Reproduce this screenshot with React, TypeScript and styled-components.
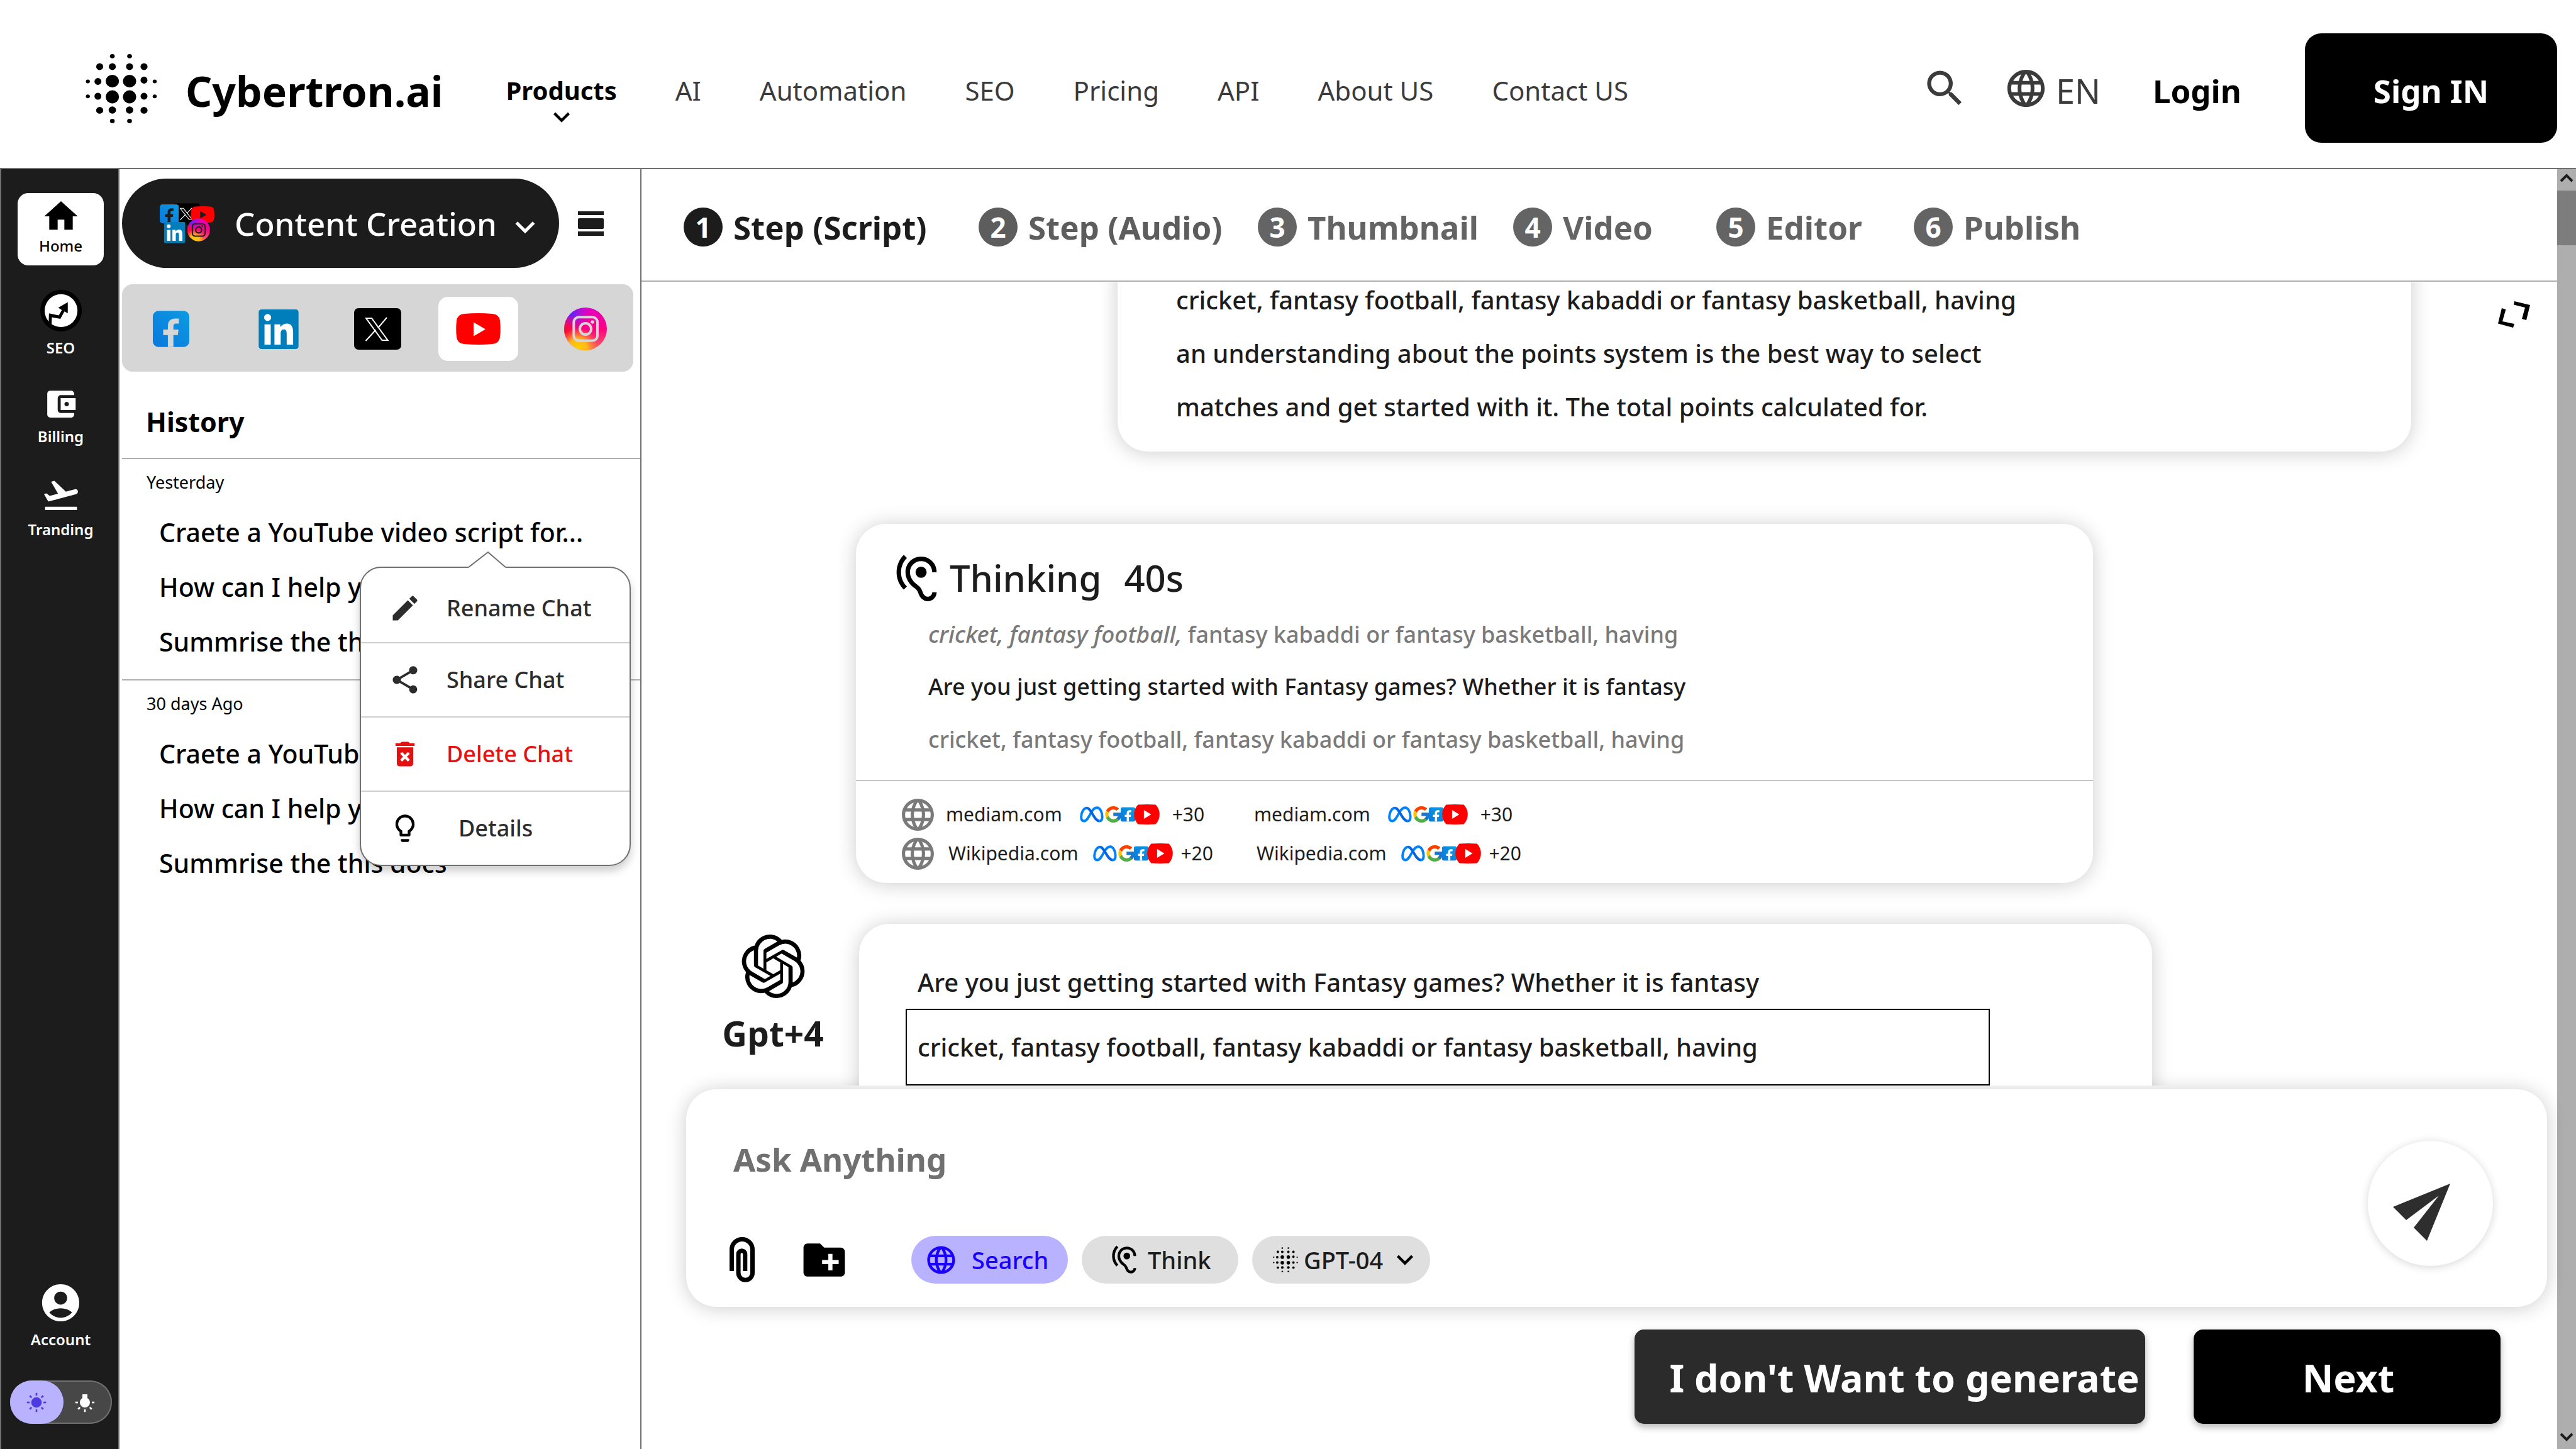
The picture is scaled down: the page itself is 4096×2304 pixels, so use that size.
import React from "react";
import styled, { createGlobalStyle, css } from "styled-components";
import {
  MdAccountBalanceWallet,
  MdAccountCircle,
  MdCreateNewFolder,
  MdDeleteForever,
  MdEdit,
  MdExpandMore,
  MdFlightTakeoff,
  MdHearing,
  MdHome,
  MdLanguage,
  MdLightbulbOutline,
  MdSearch,
  MdShare,
} from "react-icons/md";
import { FcGoogle } from "react-icons/fc";

const ink = "#1c1c1c";
const rule = "#707070";
const softRule = "#afafaf";
const lilac = "#b9b3ff";
const glow = "0 2px 32px rgba(0, 0, 0, 0.2)";

const Global = createGlobalStyle`
  *, *::before, *::after { box-sizing: border-box; }
  body {
    margin: 0;
    background: #fff;
    color: #000;
    font-family: "Noto Sans", "Open Sans", sans-serif;
  }
  button, input { font: inherit; color: inherit; }
  button { margin: 0; padding: 0; border: 0; background: none; cursor: pointer; }
  a { color: inherit; text-decoration: none; }
  ul, ol, p, h1, h2, h3 { margin: 0; padding: 0; list-style: none; }
  svg { display: block; flex: none; }
`;

/* ---------- drawings ---------- */

const dotRows: [number, number, number, number][] = [
  [139.7, 130.5, 3.2, 3], [246, 130.5, 3.2, 3], [139.7, 154.2, 3.2, 3], [246, 154.2, 3.2, 3],
  [178.6, 90.3, 3.8, 3.4], [206, 90.3, 3.8, 3.4], [178.6, 193.4, 3.8, 3.4], [206, 193.4, 3.8, 3.4],
  [158.5, 107, 5.6, 5.4], [178.6, 107, 5.6, 5.4], [206, 107, 5.6, 5.4], [229, 107, 5.6, 5.4],
  [158.5, 176.4, 5.6, 5.4], [178.6, 176, 5.9, 5.8], [206, 176, 5.9, 5.8], [229, 176.4, 5.6, 5.4],
  [155.7, 130.5, 5.5, 5.4], [229, 128.4, 5.5, 5.6], [155.7, 154, 5.5, 5.6], [229, 154, 5.5, 5.4],
  [178.6, 130, 10.6, 10], [206, 130, 10.6, 10], [178.6, 155, 10.6, 10.4], [206, 155, 10.6, 10.4],
];

const DotMark = ({ width, height, even }: { width: number; height: number; even?: boolean }) => (
  <svg width={width} height={height} viewBox="136 86 114 111" preserveAspectRatio="none" fill="currentColor" aria-hidden>
    {dotRows.map(([x, y, rx, ry], i) => (
      <ellipse key={i} cx={x} cy={y} rx={even ? Math.min(rx, 8) : rx} ry={even ? Math.min(ry, 8) : ry} />
    ))}
  </svg>
);

type Art = { x?: number; y?: number; width: number; height: number; cut?: string };

const FacebookArt = ({ cut = "#d6d6d6", ...box }: Art) => (
  <svg {...box} viewBox="76 64 172 170" aria-hidden>
    <defs>
      <linearGradient id="fbBlue" x1="0" y1="1" x2="1" y2="0">
        <stop offset="0" stopColor="#0a78dc" />
        <stop offset="1" stopColor="#0c9be2" />
      </linearGradient>
    </defs>
    <rect x="76" y="64" width="172" height="170" rx="26" fill="url(#fbBlue)" />
    <path
      fill={cut}
      d="M147 234V178H125V152H147V134C147 112 160 100 182 100H199V124H186C177 124 173 129 173 137V152H197L194 178H173V234Z"
    />
  </svg>
);

const LinkedInArt = (box: Art) => (
  <svg {...box} viewBox="114 222 192 191" aria-hidden>
    <rect x="114" y="222" width="192" height="191" rx="14" fill="#007ebb" />
    <circle cx="157" cy="261" r="17" fill="#fff" />
    <path
      fill="#fff"
      d="M142 294H172V392H142ZM190 294H218V307C226 296 238 290 250 290C272 290 280 306 280 332V392H249V340C249 326 246 318 235 318C224 318 220 327 220 340V392H190Z"
    />
  </svg>
);

const XArt = (box: Art) => (
  <svg {...box} viewBox="0 0 75 66" preserveAspectRatio="none" aria-hidden>
    <rect width="75" height="66" rx="7" fill="#000" />
    <g fill="none" stroke="#fff" strokeWidth="2">
      <path d="M19 16H28L53.5 51H44.5Z" />
      <path d="M52 15L38 31.500M18.500 52L34.500 34.500" />
    </g>
  </svg>
);

const YouTubeArt = ({ cut = "#fff", ...box }: Art) => (
  <svg {...box} viewBox="0 0 71 50" preserveAspectRatio="none" aria-hidden>
    <path
      fill="#f00"
      d="M13 1Q35.500-1 58 1Q69 2 70 12Q71.500 25 70 38Q69 48 58 49Q35.500 51 13 49Q2 48 1 38Q-.5 25 1 12Q2 2 13 1Z"
    />
    <path fill={cut} d="M28 14.500L47 25.500L28 36.500Z" />
  </svg>
);

const InstagramArt = ({ cut = "#d6d6d6", ...box }: Art) => (
  <svg {...box} viewBox="324 192 204 204" aria-hidden>
    <defs>
      <linearGradient id="igBase" x1="0" y1="0" x2="0" y2="1">
        <stop offset="0" stopColor="#e200c4" />
        <stop offset=".5" stopColor="#ff0080" />
        <stop offset="1" stopColor="#f26a5e" />
      </linearGradient>
      <radialGradient id="igViolet" cx=".18" cy=".14" r=".42">
        <stop offset="0" stopColor="#5a22ff" />
        <stop offset="1" stopColor="#9a1cf0" stopOpacity="0" />
      </radialGradient>
      <radialGradient id="igRed" cx="0" cy=".55" r=".4">
        <stop offset="0" stopColor="#ff0a28" />
        <stop offset="1" stopColor="#ff0a28" stopOpacity="0" />
      </radialGradient>
      <radialGradient id="igGold" cx=".32" cy=".95" r=".48">
        <stop offset="0" stopColor="#ffd000" />
        <stop offset=".45" stopColor="#ffb81c" />
        <stop offset="1" stopColor="#ff7a2c" stopOpacity="0" />
      </radialGradient>
    </defs>
    {["igBase", "igViolet", "igRed", "igGold"].map((id) => (
      <circle key={id} cx="426" cy="294" r="102" fill={`url(#${id})`} />
    ))}
    <g fill="none" stroke={cut} strokeWidth="12">
      <rect x="370" y="238" width="113" height="112" rx="24" />
      <circle cx="426" cy="294" r="27" />
    </g>
    <circle cx="459" cy="261" r="8" fill={cut} />
  </svg>
);

const SocialCluster = () => (
  <svg width="87" height="64" viewBox="76 54 492 360" aria-hidden>
    <XArt x={200} y={54} width={237} height={191} />
    <FacebookArt x={76} y={64} width={172} height={170} cut={ink} />
    <YouTubeArt x={357} y={81} width={211} height={150} cut={ink} />
    <LinkedInArt x={114} y={222} width={192} height={191} />
    <InstagramArt x={324} y={192} width={204} height={204} cut={ink} />
  </svg>
);

const SourceCluster = () => (
  <svg width="127" height="32" viewBox="86 55 713 178" aria-hidden>
    <g fill="none" strokeWidth="22">
      <path
        stroke="#0082fb"
        d="M148 86C118 86 98 130 98 165C98 190 108 203 124 203C150 203 168 160 188 126C202 102 218 84 238 84C268 84 286 125 286 165C286 190 276 203 262 203"
      />
      <path stroke="#0465e2" d="M148 86C190 86 210 203 262 203" />
    </g>
    <FcGoogle x={298} y={56} size={175} />
    <FacebookArt x={450} y={78} width={132} height={132} cut="#fff" />
    <path
      fill="#f00"
      d="M605 57Q685 52 763 57Q798 95 798 143Q798 195 763 231Q685 236 605 231Q570 195 570 143Q570 95 605 57Z"
    />
    <path fill="#fff" d="M658 105L723 144L658 183Z" />
  </svg>
);

const SeoIcon = () => (
  <svg width="72" height="72" viewBox="43 25 405 405" aria-hidden>
    <circle cx="246" cy="227" r="186" fill="#000" />
    <circle cx="246" cy="227" r="147" fill="#fff" />
    <path d="M135 340L138 252L226 270L253 222L221 201L306 152V250L276 234L240 300L164 286L161 355Z" />
  </svg>
);

const MenuBars = () => (
  <svg width="41" height="39" viewBox="0 0 41 39" fill={ink} aria-hidden>
    <rect width="41" height="6" />
    <rect y="11" width="41" height="17" rx="2" />
    <rect y="32" width="41" height="7" />
  </svg>
);

const OpenAiMark = () => (
  <svg width="101" height="101" viewBox="0 0 24 24" fill="#000" aria-hidden>
    <path d="M22.2819 9.8211a5.9847 5.9847 0 0 0-.5157-4.9108 6.0462 6.0462 0 0 0-6.5098-2.9A6.0651 6.0651 0 0 0 4.9807 4.1818a5.9847 5.9847 0 0 0-3.9977 2.9 6.0462 6.0462 0 0 0 .7427 7.0966 5.98 5.98 0 0 0 .511 4.9107 6.051 6.051 0 0 0 6.5146 2.9001A5.9847 5.9847 0 0 0 13.2599 24a6.0557 6.0557 0 0 0 5.7718-4.2058 5.9894 5.9894 0 0 0 3.9977-2.9001 6.0557 6.0557 0 0 0-.7475-7.0729zm-9.022 12.6081a4.4755 4.4755 0 0 1-2.8764-1.0408l.1419-.0804 4.7783-2.7582a.7948.7948 0 0 0 .3927-.6813v-6.7369l2.02 1.1686a.071.071 0 0 1 .038.052v5.5826a4.504 4.504 0 0 1-4.4945 4.4944zm-9.6607-4.1254a4.4708 4.4708 0 0 1-.5346-3.0137l.142.0852 4.783 2.7582a.7712.7712 0 0 0 .7806 0l5.8428-3.3685v2.3324a.0804.0804 0 0 1-.0332.0615L9.74 19.9502a4.4992 4.4992 0 0 1-6.1408-1.6464zM2.3408 7.8956a4.485 4.485 0 0 1 2.3655-1.9728V11.6a.7664.7664 0 0 0 .3879.6765l5.8144 3.3543-2.0201 1.1685a.0757.0757 0 0 1-.071 0l-4.8303-2.7865A4.504 4.504 0 0 1 2.3408 7.872zm16.5963 3.8558L13.1038 8.364 15.1192 7.2a.0757.0757 0 0 1 .071 0l4.8303 2.7913a4.4944 4.4944 0 0 1-.6765 8.1042v-5.6772a.79.79 0 0 0-.407-.667zm2.0107-3.0231l-.142-.0852-4.7735-2.7818a.7759.7759 0 0 0-.7854 0L9.409 9.2297V6.8974a.0662.0662 0 0 1 .0284-.0615l4.8303-2.7866a4.4992 4.4992 0 0 1 6.6802 4.66zM8.3065 12.863l-2.02-1.1638a.0804.0804 0 0 1-.038-.0567V6.0742a4.4992 4.4992 0 0 1 7.3757-3.4537l-.142.0805L8.704 5.459a.7948.7948 0 0 0-.3927.6813zm1.0976-2.3654l2.602-1.4998 2.6069 1.4998v2.9994l-2.5974 1.4997-2.6067-1.4997Z" />
  </svg>
);

const ClipIcon = () => (
  <svg width="40" height="72" viewBox="0 0 40 72" fill="none" stroke="#000" strokeWidth="7" aria-hidden>
    <path d="M3.500 54V20A16.500 16.500 0 0 1 36.500 20V57A11.200 11.200 0 0 1 14.100 57V27A5.350 5.350 0 0 1 24.800 27V54" />
  </svg>
);

const PlaneIcon = () => (
  <svg width="199" height="199" viewBox="0 0 199 199" fill="#2e2e2e" aria-hidden>
    <path d="M131 68L40 105L61 126L113 87L73 138L94 159Z" />
  </svg>
);

const ExpandIcon = () => (
  <svg width="51" height="42" viewBox="0 0 51 42" fill="#000" aria-hidden>
    <path d="M26 0L51 6L45 30L38 28L43 10L25 5.600ZM6 11L12.400 13L7 32L26 36L24 42L0 35.500Z" />
  </svg>
);

const Rays = ({ from, to }: { from: number; to: number }) => (
  <>
    {[0, 45, 90, 135, 180, 225, 270, 315].filter((a) => a >= from && a <= to).map((a) => (
      <rect key={a} x="11" y="-1.300" width="4.200" height="2.600" transform={`rotate(${a})`} />
    ))}
  </>
);

const SunIcon = () => (
  <svg width="32" height="32" viewBox="-16 -16 32 32" fill="#4b3be0" aria-hidden>
    <circle r="8.300" />
    <Rays from={0} to={315} />
  </svg>
);

const BulbIcon = () => (
  <svg width="32" height="32" viewBox="-16 -16 32 32" fill="#fff" aria-hidden>
    <circle r="8" />
    <rect x="-4" y="-13" width="8" height="9" />
    <Rays from={0} to={180} />
  </svg>
);

const Caret = ({ up }: { up?: boolean }) => (
  <svg width="22" height="14" viewBox="0 0 22 14" fill="none" stroke="#1c1c1c" strokeWidth="4" aria-hidden>
    <path d={up ? "M2 12L11 3L20 12" : "M2 2L11 11L20 2"} />
  </svg>
);

/* ---------- header ---------- */

const Shell = styled.div`
  display: flex;
  flex-direction: column;
  height: 100vh;
  overflow: hidden;
`;

const Header = styled.header`
  display: flex;
  align-items: center;
  padding: 53px 30px 40px 136px;
  border-bottom: 2px solid ${rule};
  white-space: nowrap;
`;

const Brand = styled.a`
  display: flex;
  align-items: center;
  gap: 45px;
  font-size: 66px;
  font-weight: 700;
  line-height: 92px;

  span { padding-top: 8px; }
`;

const NavList = styled.ul`
  display: flex;
  gap: 93px;
  margin-left: 100px;
`;

const NavLink = styled.a<{ $active?: boolean }>`
  position: relative;
  display: block;
  padding-top: 8px;
  font-size: 42px;
  line-height: 60px;
  color: #3b3b3b;
  ${(p) => p.$active && css`
    font-size: 40px;
    font-weight: 700;
    color: #000;
  `}
`;

const NavCaret = styled(MdExpandMore)`
  position: absolute;
  left: calc(50% - 26px);
  top: 54px;
`;

const HeaderTools = styled.div`
  display: flex;
  align-items: center;
  margin-left: auto;
`;

const SearchButton = styled.button`
  color: #3b3b3b;
`;

const LanguageButton = styled.button`
  display: flex;
  align-items: center;
  gap: 12px;
  margin-left: 56px;
  color: #3b3b3b;
  font-size: 54px;
  line-height: 72px;

  span { padding-top: 8px; }
`;

const LoginLink = styled.a`
  margin-left: 83px;
  padding-top: 8px;
  font-size: 51px;
  font-weight: 700;
  line-height: 72px;
`;

const SignInButton = styled.button`
  width: 401px;
  height: 174px;
  margin-left: 101px;
  padding-top: 8px;
  border-radius: 26px;
  background: #000;
  color: #fff;
  font-size: 51px;
  font-weight: 700;
`;

/* ---------- rail ---------- */

const Body = styled.div`
  display: grid;
  grid-template-columns: 190px 830px minmax(0, 1fr) 30px;
  flex: 1;
  min-height: 0;
`;

const Rail = styled.nav`
  display: flex;
  flex-direction: column;
  align-items: center;
  padding: 38px 0 40px 3px;
  border: solid ${rule};
  border-width: 0 2px;
  background: ${ink};
`;

const RailList = styled.ul`
  display: flex;
  flex-direction: column;
  gap: 36px;
`;

const RailButton = styled.button<{ $active?: boolean }>`
  display: flex;
  flex-direction: column;
  align-items: center;
  gap: 8px;
  width: 137px;
  padding-bottom: 10px;
  color: #fff;
  font-size: 24px;
  font-weight: 600;
  line-height: 30px;
  ${(p) => p.$active && css`
    gap: 0;
    padding: 5px 0 16px;
    border-radius: 17px;
    background: #fff;
    color: #000;
    font-weight: 500;
  `}
`;

const RailFoot = styled.div`
  display: flex;
  flex-direction: column;
  align-items: center;
  gap: 40px;
  margin-top: auto;
`;

const ThemeSwitch = styled.button`
  display: flex;
  width: 162px;
  height: 69px;
  border-radius: 35px;
  background: #474747;
  box-shadow: inset 0 0 0 2px ${rule};
`;

const SwitchHalf = styled.span<{ $on?: boolean }>`
  display: flex;
  align-items: center;
  justify-content: center;
  width: ${(p) => (p.$on ? 85 : 69)}px;
  height: 69px;
  border-radius: 35px;
  background: ${(p) => (p.$on ? lilac : "transparent")};
`;

/* ---------- history panel ---------- */

const Panel = styled.aside`
  padding: 15px 0 0 4px;
  border-right: 2px solid ${rule};
`;

const PanelTop = styled.div`
  display: flex;
  align-items: center;
  gap: 30px;
`;

const TopicButton = styled.button`
  display: flex;
  align-items: center;
  width: 695px;
  height: 142px;
  padding-left: 60px;
  border-radius: 71px;
  background: ${ink};
  color: #fff;
  font-size: 51px;
  font-weight: 500;
  white-space: nowrap;
`;

const TopicName = styled.span`
  margin: 0 14px 0 32px;
`;

const TopicCaret = styled.span`
  padding-top: 12px;
`;

const Platforms = styled.div`
  display: grid;
  grid-template-columns: 156fr 186fr 129fr 190fr 152fr;
  align-items: center;
  justify-items: center;
  height: 139px;
  margin: 26px 11px 0 0;
  padding-top: 3px;
  border-radius: 17px;
  background: #d6d6d6;
`;

const PlatformButton = styled.button<{ $active?: boolean }>`
  ${(p) => p.$active && css`
    padding: 26px 28px;
    border-radius: 15px;
    background: #fff;
  `}
`;

const HistoryTitle = styled.h2`
  padding: 50px 0 27px 38px;
  font-size: 43px;
  font-weight: 700;
  line-height: 60px;
`;

const Group = styled.section`
  padding: 17px 0 16px;
  border-top: 2px solid ${softRule};
`;

const GroupTitle = styled.h3`
  margin-bottom: 16px;
  padding-left: 39px;
  font-size: 27px;
  font-weight: 400;
  line-height: 40px;
`;

const ChatItem = styled.li`
  position: relative;
  padding-left: 59px;
  font-size: 41px;
  font-weight: 500;
  line-height: 87px;
  white-space: nowrap;
`;

const Menu = styled.div`
  position: absolute;
  z-index: 2;
  top: 98px;
  left: 378px;
  width: 431px;
  border: 2px solid ${rule};
  border-radius: 34px;
  background: #fff;
  box-shadow: 0 8px 14px rgba(0, 0, 0, 0.2);
`;

const MenuTip = styled.svg`
  position: absolute;
  top: -27px;
  left: 171px;
`;

const MenuItem = styled.button<{ $tone?: string; $indent?: number }>`
  display: flex;
  align-items: center;
  gap: ${(p) => p.$indent ?? 40}px;
  width: 100%;
  height: 118px;
  padding-left: 44px;
  border-top: 2px solid #cfcfcf;
  color: ${(p) => p.$tone ?? "#2c2c2c"};
  font-size: 36px;
  font-weight: 500;
  line-height: 50px;

  &:first-of-type { padding-top: 10px; border-top: 0; }
  &:last-of-type svg { color: #000; }
`;

/* ---------- workspace ---------- */

const Main = styled.main`
  display: flex;
  flex-direction: column;
  min-height: 0;
`;

const Steps = styled.ol`
  display: grid;
  grid-template-columns: 469px 444px 406px 323px 314px auto;
  padding: 61px 0 54px 67px;
  border-bottom: 2px solid ${softRule};
`;

const Step = styled.a<{ $tone: string }>`
  display: flex;
  align-items: center;
  gap: 17px;
  color: ${(p) => p.$tone};
  font-size: 51px;
  font-weight: 700;
  line-height: 62px;
  white-space: nowrap;
`;

const StepNumber = styled.span<{ $tone: string }>`
  width: 62px;
  height: 62px;
  border-radius: 50%;
  background: ${(p) => p.$tone};
  color: #fff;
  font-size: 44px;
  text-align: center;
`;

const Thread = styled.section`
  position: relative;
  z-index: 1;
  flex: 1;
  min-height: 0;
  margin: 1px 0 6px;
  overflow: hidden;
`;

const ExpandButton = styled.button`
  position: absolute;
  top: 30px;
  right: 43px;
`;

const Scrolled = styled.div`
  margin-top: -57px;
`;

const Card = styled.article`
  border-radius: 48px;
  background: #fff;
  box-shadow: ${glow};
`;

const Prompt = styled(Card)`
  margin: 0 232px 115px 757px;
  padding: 42px 93px 29px;
  color: ${ink};
  font-size: 40px;
  font-weight: 500;
  line-height: 85px;
`;

const Thinking = styled(Card)`
  margin: 0 738px 65px 341px;
  padding-bottom: 16px;
`;

const ThinkingHead = styled.h2`
  display: flex;
  align-items: center;
  gap: 10px;
  padding: 45px 54px 0;
  color: #000;
  font-size: 58px;
  font-weight: 500;
  line-height: 81px;

  span { padding-bottom: 4px; color: ${ink}; }
  span + span { margin-left: 26px; }
`;

const Thoughts = styled.div`
  padding: 3px 115px 22px;
  border-bottom: 2px solid #c4c4c4;
  font-size: 36px;
  font-weight: 500;
  line-height: 84px;

  i { font-size: 37px; }
`;

const Thought = styled.p<{ $faint?: boolean }>`
  height: 84px;
  color: ${(p) => (p.$faint ? "#7a7a7a" : ink)};
`;

const Sources = styled.ul`
  padding: 22px 0 0 68px;
`;

const SourceRow = styled.li`
  display: flex;
  align-items: center;
  height: 62px;
  color: #7a7a7a;
`;

const Source = styled.a<{ $close?: boolean }>`
  display: flex;
  align-items: center;
  gap: ${(p) => (p.$close ? 24 : 28)}px;
  width: 490px;
  color: ${ink};
  font-size: 30px;
  line-height: 42px;

  &:first-of-type { margin-left: ${(p) => (p.$close ? 18 : 14)}px; }
  span:last-child { margin-left: ${(p) => (p.$close ? -12 : -8)}px; }
`;

const ReplyRow = styled.div`
  display: flex;
  align-items: flex-start;
  padding: 0 644px 0 127px;
`;

const Author = styled.div`
  display: flex;
  flex-direction: column;
  align-items: center;
  gap: 18px;
  width: 219px;
  padding: 17px 55px 0 0;
  color: ${ink};
  font-size: 55px;
  font-weight: 700;
  line-height: 75px;
`;

const Reply = styled(Card)`
  flex: 1;
  padding: 50px 258px 60px 74px;
  color: ${ink};
  font-size: 40px;
  font-weight: 500;
`;

const ReplyLine = styled.p`
  padding-left: 19px;
  line-height: 85px;
`;

const ReplyBox = styled.p`
  padding-left: 17px;
  border: 2px solid #000;
  line-height: 118px;
`;

const Composer = styled.form`
  position: relative;
  display: flex;
  align-items: flex-start;
  height: 346px;
  margin: 0 16px 0 71px;
  padding: 76px 86px 34px 69px;
  border-radius: 48px;
  background: #fff;
  box-shadow: ${glow};
`;

const ComposerMain = styled.div`
  flex: 1;
`;

const Ask = styled.input`
  display: block;
  width: 100%;
  height: 70px;
  margin-bottom: 85px;
  padding: 0 6px;
  border: 0;
  outline: 0;
  background: none;
  font-size: 51px;
  font-weight: 700;

  &::placeholder { color: ${rule}; opacity: 1; }
`;

const Tools = styled.div`
  display: flex;
  align-items: center;
  height: 80px;
`;

const FolderButton = styled.button`
  margin: 0 99px 0 71px;
`;

const Chip = styled.button<{ $active?: boolean; $width: number; $inset: number; $gap: number }>`
  display: flex;
  align-items: center;
  gap: ${(p) => p.$gap}px;
  width: ${(p) => p.$width}px;
  height: 76px;
  margin-right: 22px;
  padding-left: ${(p) => p.$inset}px;
  border-radius: 38px;
  background: ${(p) => (p.$active ? lilac : "#dfdfdf")};
  color: ${(p) => (p.$active ? "#1a00ff" : "#000")};
  font-size: 38px;
  font-weight: 500;
  line-height: 52px;
  white-space: nowrap;

  span { color: ${(p) => (p.$active ? "#1a00ff" : ink)}; }
`;

const SendButton = styled.button`
  width: 199px;
  height: 199px;
  margin-top: 6px;
  border-radius: 50%;
  background: #fff;
  box-shadow: 0 2px 14px rgba(0, 0, 0, 0.16);
`;

const Actions = styled.footer`
  display: flex;
  justify-content: flex-end;
  gap: 77px;
  padding: 36px 90px 40px 0;
`;

const ActionButton = styled.button<{ $primary?: boolean }>`
  width: ${(p) => (p.$primary ? 488 : 812)}px;
  height: 150px;
  padding: ${(p) => (p.$primary ? "3px 0 0 4px" : "3px 8px 0 54px")};
  border-radius: 15px;
  background: ${(p) => (p.$primary ? "#000" : "#2b2b2b")};
  box-shadow: 0 5px 12px rgba(0, 0, 0, 0.3);
  color: #fff;
  font-size: 61px;
  font-weight: 700;
  white-space: nowrap;
`;

const ScrollTrack = styled.div`
  display: flex;
  flex-direction: column;
  align-items: center;
  padding: 7px 0 12px;
  background: #aeaeae;
`;

const ScrollThumb = styled.div`
  width: 100%;
  height: 87px;
  margin: 13px 0 auto;
  background: #7d7d7d;
`;

/* ---------- content ---------- */

const pages = ["AI", "Automation", "SEO", "Pricing", "API", "About US", "Contact US"];

const steps: [string, string][] = [
  ["Step (Script)", ink],
  ["Step (Audio)", "#5d5d5d"],
  ["Thumbnail", "#646464"],
  ["Video", "#646464"],
  ["Editor", "#646464"],
  ["Publish", "#646464"],
];

const groups = ["Yesterday", "30 days Ago"];
const sources: [string, string][] = [["mediam.com", "+30"], ["Wikipedia.com", "+20"]];

const ChatMenu = () => (
  <Menu>
    <MenuTip width="59" height="28" viewBox="0 0 59 28" aria-hidden>
      <path d="M0 26L31 2L59 26V28H0Z" fill="#fff" />
      <path d="M0 26L31 2L59 26" fill="none" stroke={rule} strokeWidth="2" />
    </MenuTip>
    <MenuItem type="button"><MdEdit size={52} />Rename Chat</MenuItem>
    <MenuItem type="button"><MdShare size={52} />Share Chat</MenuItem>
    <MenuItem type="button" $tone="#e31111"><MdDeleteForever size={52} />Delete Chat</MenuItem>
    <MenuItem type="button" $indent={59}><MdLightbulbOutline size={52} />Details</MenuItem>
  </Menu>
);

export default function App() {
  return (
    <Shell>
      <Global />
      <Header>
        <Brand href="#"><DotMark width={114} height={111} /><span>Cybertron.ai</span></Brand>
        <nav>
          <NavList>
            <li><NavLink href="#" $active>Products<NavCaret size={52} /></NavLink></li>
            {pages.map((p) => <li key={p}><NavLink href="#">{p}</NavLink></li>)}
          </NavList>
        </nav>
        <HeaderTools>
          <SearchButton aria-label="Search"><MdSearch size={75} /></SearchButton>
          <LanguageButton><MdLanguage size={71} /><span>EN</span></LanguageButton>
          <LoginLink href="#">Login</LoginLink>
          <SignInButton>Sign IN</SignInButton>
        </HeaderTools>
      </Header>

      <Body>
        <Rail>
          <RailList>
            <li><RailButton $active><MdHome size={64} />Home</RailButton></li>
            <li><RailButton><SeoIcon />SEO</RailButton></li>
            <li><RailButton><MdAccountBalanceWallet size={57} />Billing</RailButton></li>
            <li><RailButton><MdFlightTakeoff size={64} />Tranding</RailButton></li>
          </RailList>
          <RailFoot>
            <RailButton><MdAccountCircle size={71} />Account</RailButton>
            <ThemeSwitch role="switch" aria-checked="true" aria-label="Light theme">
              <SwitchHalf $on><SunIcon /></SwitchHalf>
              <SwitchHalf><BulbIcon /></SwitchHalf>
            </ThemeSwitch>
          </RailFoot>
        </Rail>

        <Panel>
          <PanelTop>
            <TopicButton>
              <SocialCluster />
              <TopicName>Content Creation</TopicName>
              <TopicCaret><MdExpandMore size={62} /></TopicCaret>
            </TopicButton>
            <button aria-label="Menu"><MenuBars /></button>
          </PanelTop>
          <Platforms>
            <PlatformButton aria-label="Facebook"><FacebookArt width={58} height={58} /></PlatformButton>
            <PlatformButton aria-label="LinkedIn"><LinkedInArt width={64} height={63} /></PlatformButton>
            <PlatformButton aria-label="X"><XArt width={75} height={66} /></PlatformButton>
            <PlatformButton aria-label="YouTube" $active><YouTubeArt width={71} height={50} /></PlatformButton>
            <PlatformButton aria-label="Instagram"><InstagramArt width={68} height={68} /></PlatformButton>
          </Platforms>
          <HistoryTitle>History</HistoryTitle>
          {groups.map((g, i) => (
            <Group key={g}>
              <GroupTitle>{g}</GroupTitle>
              <ul>
                <ChatItem>
                  <a href="#">{i === 0 ? "Craete a YouTube video script for..." : "Craete a YouTube"}</a>
                  {i === 0 && <ChatMenu />}
                </ChatItem>
                <ChatItem><a href="#">How can I help you</a></ChatItem>
                <ChatItem><a href="#">Summrise the this docs</a></ChatItem>
              </ul>
            </Group>
          ))}
        </Panel>

        <Main>
          <Steps>
            {steps.map(([name, tone], i) => (
              <li key={name}>
                <Step href="#" $tone={tone}><StepNumber $tone={tone}>{i + 1}</StepNumber>{name}</Step>
              </li>
            ))}
          </Steps>

          <Thread>
            <Scrolled>
              <Prompt>
                <p>cricket, fantasy football, fantasy kabaddi or fantasy basketball, having</p>
                <p>an understanding about the points system is the best way to select</p>
                <p>matches and get started with it. The total points calculated for.</p>
              </Prompt>
              <Thinking>
                <ThinkingHead><MdHearing size={85} /><span>Thinking</span><span>40s</span></ThinkingHead>
                <Thoughts>
                  <Thought $faint><i>cricket, fantasy football,</i> fantasy kabaddi or fantasy basketball, having</Thought>
                  <Thought>Are you just getting started with Fantasy games? Whether it is fantasy</Thought>
                  <Thought $faint>cricket, fantasy football, fantasy kabaddi or fantasy basketball, having</Thought>
                </Thoughts>
                <Sources>
                  {sources.map(([site, count], i) => (
                    <SourceRow key={site}>
                      <MdLanguage size={61} />
                      {[0, 1].map((n) => (
                        <Source key={n} href="#" $close={i === 1}>
                          <span>{site}</span><SourceCluster /><span>{count}</span>
                        </Source>
                      ))}
                    </SourceRow>
                  ))}
                </Sources>
              </Thinking>
              <ReplyRow>
                <Author><OpenAiMark />Gpt+4</Author>
                <Reply>
                  <ReplyLine>Are you just getting started with Fantasy games? Whether it is fantasy</ReplyLine>
                  <ReplyBox>cricket, fantasy football, fantasy kabaddi or fantasy basketball, having</ReplyBox>
                </Reply>
              </ReplyRow>
            </Scrolled>
            <ExpandButton aria-label="Expand"><ExpandIcon /></ExpandButton>
          </Thread>

          <Composer onSubmit={(e) => e.preventDefault()}>
            <ComposerMain>
              <Ask aria-label="Ask Anything" placeholder="Ask Anything" />
              <Tools>
                <button type="button" aria-label="Attach file"><ClipIcon /></button>
                <FolderButton type="button" aria-label="Add folder"><MdCreateNewFolder size={79} /></FolderButton>
                <Chip type="button" $active $width={249} $inset={21} $gap={22}><MdLanguage size={53} /><span>Search</span></Chip>
                <Chip type="button" $width={249} $inset={42} $gap={12}><MdHearing size={51} /><span>Think</span></Chip>
                <Chip type="button" $width={283} $inset={33} $gap={9}>
                  <DotMark width={40} height={40} even /><span>GPT-04</span><MdExpandMore size={52} />
                </Chip>
              </Tools>
            </ComposerMain>
            <SendButton aria-label="Send"><PlaneIcon /></SendButton>
          </Composer>

          <Actions>
            <ActionButton>I don't Want to generate</ActionButton>
            <ActionButton $primary>Next</ActionButton>
          </Actions>
        </Main>

        <ScrollTrack aria-hidden>
          <Caret up />
          <ScrollThumb />
          <Caret />
        </ScrollTrack>
      </Body>
    </Shell>
  );
}
